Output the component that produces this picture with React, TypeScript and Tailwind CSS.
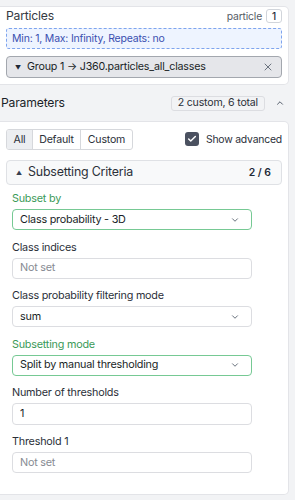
import { ChevronDown, ChevronUp, X, Check } from 'lucide-react';

const font = { fontFamily: 'Inter, "Noto Sans", sans-serif' };

interface FieldProps {
  label: string;
  value: string;
  kind: 'select' | 'input';
  custom?: boolean;
  placeholder?: boolean;
}

function Field({ label, value, kind, custom, placeholder }: FieldProps) {
  return (
    <div className="flex flex-col">
      <div
        className={`h-[16px] leading-[16px] text-[10.8px] tracking-[-0.22px] mb-[2px] ${
          custom ? 'text-[#3b9a58]' : 'text-[#2b3039]'
        }`}
      >
        {label}
      </div>
      <div
        className={`w-[240px] h-[21.3px] rounded-[4px] border flex items-center pl-[7px] pr-[11px] bg-white ${
          custom ? 'border-[#76c994]' : 'border-[#dcdde1]'
        }`}
      >
        <span
          className={`flex-1 text-[10.8px] tracking-[-0.22px] ${placeholder ? 'text-[#878b93]' : 'text-[#1a1f27]'}`}
        >
          {value}
        </span>
        {kind === 'select' && <ChevronDown className="w-[10px] h-[10px] text-[#4b5563]" strokeWidth={2} />}
      </div>
    </div>
  );
}

export default function App() {
  return (
    <div className="min-h-[500px] bg-[#f2f3f5] pt-[6px] pr-[6px]" style={font}>
      {/* particles input */}
      <div className="bg-white border border-l-0 border-[#e3e4e8] rounded-r-[5px] pl-[6px] pr-[6px] pb-[6px]">
        <div className="h-[19px] flex items-center justify-between">
          <span className="text-[12.2px] tracking-[-0.2px] text-[#343942]">Particles</span>
          <div className="flex items-center gap-[4px]">
            <span className="text-[10.4px] tracking-[-0.2px] text-[#555b66]">particle</span>
            <span className="h-[14px] min-w-[16px] px-[4px] flex items-center justify-center border border-[#d1d5db] rounded-[3px] text-[10px] font-medium text-[#1f2937]">
              1
            </span>
          </div>
        </div>
        <div className="mt-[2px] h-[21px] flex items-center px-[5px] bg-[#eef4ff] border border-dashed border-[#7ea4ee] rounded-[3px] text-[10.5px] tracking-[-0.2px] text-[#3a4fb0]">
          Min: 1, Max: Infinity, Repeats: no
        </div>
        <div className="mt-[7px] h-[22px] flex items-center pl-[8px] pr-[7px] bg-[#e5e6ea] border border-[#a3a7ae] rounded-[4px]">
          <span className="text-[6px] text-[#1f2937] mr-[6px]">▼</span>
          <span className="flex-1 text-[10.7px] tracking-[-0.2px] text-[#1a1f27]">
            Group 1 → J360.particles_all_classes
          </span>
          <X className="w-[12px] h-[12px] text-[#4b5563]" strokeWidth={1.6} />
        </div>
      </div>

      {/* parameters header */}
      <div className="h-[36px] flex items-center justify-between pl-[1px] pr-[4px]">
        <span className="text-[12.2px] tracking-[-0.2px] text-[#1a1f27]">Parameters</span>
        <div className="flex items-center gap-[10px]">
          <span className="h-[15px] px-[6px] flex items-center border border-[#dcdde1] rounded-[3px] text-[10.6px] tracking-[-0.2px] text-[#2b3039]">
            2 custom, 6 total
          </span>
          <ChevronUp className="w-[10px] h-[10px] text-[#374151]" strokeWidth={2} />
        </div>
      </div>

      {/* parameters card */}
      <div className="bg-white border border-l-0 border-[#e3e4e8] rounded-r-[5px] pl-[6px] pr-[6px] pt-[7px] pb-[21px]">
        <div className="flex items-center justify-between">
          <div className="flex h-[21px] border border-[#d6d8dc] rounded-[3px] overflow-hidden text-[10.6px] tracking-[-0.2px] text-[#2b3039]">
            <span className="w-[26px] flex items-center justify-center bg-[#eceef1] border-r border-[#d6d8dc]">All</span>
            <span className="w-[48px] flex items-center justify-center border-r border-[#d6d8dc]">Default</span>
            <span className="w-[51px] flex items-center justify-center">Custom</span>
          </div>
          <div className="flex items-center gap-[7px]">
            <span className="w-[14px] h-[14px] rounded-[3px] bg-[#4b5160] flex items-center justify-center">
              <Check className="w-[10px] h-[10px] text-white" strokeWidth={3.5} />
            </span>
            <span className="text-[10.4px] tracking-[-0.2px] text-[#2b3039]">Show advanced</span>
          </div>
        </div>

        <div className="mt-[10px] h-[25px] flex items-center pl-[9px] pr-[10px] bg-[#f8f9fa] border border-[#dfe1e5] rounded-[4px]">
          <span className="text-[6px] text-[#374151] mr-[6px]">▲</span>
          <span className="flex-1 text-[12.4px] tracking-[-0.2px] text-[#2b3039]">Subsetting Criteria</span>
          <span className="text-[10.4px] font-semibold text-[#1f2937]">2 / 6</span>
        </div>

        <div className="mt-[6px] pl-[6px] flex flex-col gap-[9.3px]">
          <Field label="Subset by" value="Class probability - 3D" kind="select" custom />
          <Field label="Class indices" value="Not set" kind="input" placeholder />
          <Field label="Class probability filtering mode" value="sum" kind="select" />
          <Field label="Subsetting mode" value="Split by manual thresholding" kind="select" custom />
          <Field label="Number of thresholds" value="1" kind="input" />
          <Field label="Threshold 1" value="Not set" kind="input" placeholder />
        </div>
      </div>
    </div>
  );
}
